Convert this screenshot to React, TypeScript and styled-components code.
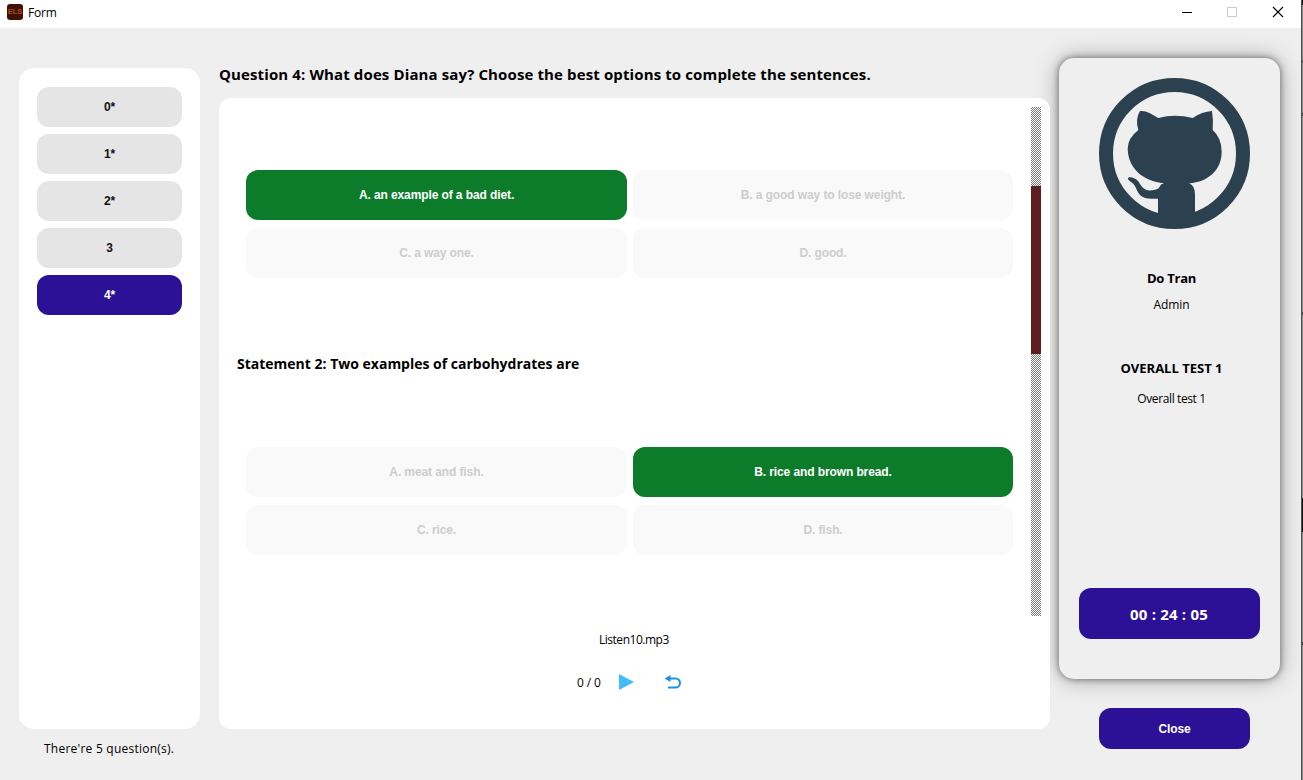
import React from "react";
import styled, { createGlobalStyle } from "styled-components";

const GlobalStyle = createGlobalStyle`
  * { box-sizing: border-box; }
  body { margin: 0; background: #efefef; font-family: "Open Sans", "Noto Sans", sans-serif; color: #000; }
  button { border: 0; padding: 0; margin: 0; }
`;

const Desktop = styled.div`
  width: 1303px;
  height: 780px;
  overflow: hidden;
  padding-right: 1px;
  background: linear-gradient(#111 0 5px, #8c8c8c 5px 60px, #555 60px 63px, #8c8c8c 63px 113px, #444 113px 116px, #8c8c8c 116px 312px, #555 312px 315px, #8c8c8c 315px 498px, #111 498px 532px, #8c8c8c 532px 642px, #444 642px 645px, #8c8c8c 645px);
`;

const Window = styled.div`
  height: 780px;
  overflow: hidden;
  background: #efefef;
  border-right: 1px solid #4f4f4f;
  display: flex;
  flex-direction: column;
`;

const TitleBar = styled.header`
  flex: none;
  position: relative;
  z-index: 1;
  height: 28px;
  background: #fff;
  display: flex;
  align-items: flex-start;
  padding: 4px 17px 0 7px;
`;

const AppIcon = styled.span`
  width: 16px;
  height: 16px;
  border-radius: 3px;
  background: #421003;
  color: #a85008;
  font: bold 7.5px/16px "Liberation Sans", sans-serif;
  text-align: center;
`;

const WindowControls = styled.div`
  margin-left: auto;
  padding-top: 2px;
  display: flex;
  gap: 34px;
`;

const Label = styled.div<{ $size?: number; $bold?: boolean; $spacing?: number }>`
  font-size: ${(p) => p.$size ?? 12}px;
  line-height: 20px;
  height: 20px;
  font-weight: ${(p) => (p.$bold ? 700 : 400)};
  letter-spacing: ${(p) => p.$spacing ?? 0}px;
  white-space: nowrap;
`;

const WindowTitle = styled(Label)`
  margin: -1px 0 0 5px;
`;

const Body = styled.main`
  flex: 1;
  display: grid;
  grid-template-columns: 191px 831px 221px;
  column-gap: 9px;
  padding-left: 19px;
`;

const Sidebar = styled.aside`
  padding: 40px 10px 0 0;
`;

const QuestionList = styled.nav`
  height: 661px;
  background: #fff;
  border-radius: 15px;
  padding: 19px 18px;
  display: flex;
  flex-direction: column;
  gap: 7px;
`;

const Button = styled.button<{ $active?: boolean; $height?: number }>`
  height: ${(p) => p.$height ?? 40}px;
  border-radius: 12px;
  background: ${(p) => (p.$active ? "#2c1096" : "#e5e5e5")};
  color: ${(p) => (p.$active ? "#fff" : "#111")};
  font: bold 12px "Liberation Sans", sans-serif;
  letter-spacing: -0.15px;
`;

const Summary = styled(Label)`
  margin: 10px 0 0 25px;
`;

const Content = styled.section`
  padding-top: 36px;
  position: relative;
  z-index: 1;
`;

const Panel = styled.div`
  margin-top: 14px;
  height: 631px;
  background: #fff;
  border-radius: 12px;
  padding: 9px 9px 0 18px;
`;

const ScrollArea = styled.div`
  height: 509px;
  display: flex;
`;

const Statements = styled.div`
  flex: 1;
  padding-top: 63px;
`;

const Options = styled.div`
  display: grid;
  grid-template-columns: 381px 380px;
  gap: 8px 6px;
  padding-left: 9px;
`;

const Option = styled.div<{ $chosen?: boolean }>`
  height: 50px;
  border-radius: 12px;
  background: ${(p) => (p.$chosen ? "#0c7c2b" : "#f9f9f9")};
  color: ${(p) => (p.$chosen ? "#fff" : "#cdcdcd")};
  font: bold 12px/50px "Liberation Sans", sans-serif;
  letter-spacing: -0.1px;
  text-align: center;
`;

const Statement = styled(Label)`
  margin: 76px 0 73px;
`;

const ScrollTrack = styled.div`
  width: 10px;
  padding-top: 79px;
  background: repeating-conic-gradient(#777 0 25%, #fff 0 50%) 0 0 / 2px 2px;
`;

const ScrollThumb = styled.div`
  height: 168px;
  background: #5e1f20;
`;

const Player = styled.footer`
  display: flex;
  flex-direction: column;
`;

const TrackName = styled(Label)`
  margin: 14px 0 0 362px;
`;

const Controls = styled.div`
  display: flex;
  align-items: flex-start;
  margin: 23px 0 0 340px;
`;

const PlayIcon = styled.svg`
  margin-left: 17px;
`;

const UndoIcon = styled.svg`
  margin-left: 28px;
`;

const Account = styled.aside`
  padding-top: 30px;
  display: flex;
  flex-direction: column;
`;

const Card = styled.div`
  height: 621px;
  border-radius: 15px;
  background: #efefef;
  box-shadow: 0 0 7px rgba(0, 0, 0, 0.5), 0 0 24px rgba(0, 0, 0, 0.3);
  padding: 20px 20px 0;
  display: flex;
  flex-direction: column;
`;

const Avatar = styled.svg`
  margin-left: 20px;
  flex: none;
`;

const CardText = styled(Label)<{ $top: number }>`
  margin-top: ${(p) => p.$top}px;
  text-align: center;
  padding-left: 4px;
`;

const Timer = styled.div`
  margin-top: 179px;
  height: 51px;
  border-radius: 12px;
  background: #2c1096;
  color: #fff;
  font-size: 15px;
  font-weight: 700;
  line-height: 53px;
  letter-spacing: 0.2px;
  padding-right: 1px;
  text-align: center;
`;

const CloseButton = styled(Button)`
  margin: 29px 30px 0 40px;
`;

const questions = ["0*", "1*", "2*", "3", "4*"];

const first = ["A. an example of a bad diet.", "B. a good way to lose weight.", "C. a way one.", "D. good."];
const second = ["A. meat and fish.", "B. rice and brown bread.", "C. rice.", "D. fish."];

function OptionGroup({ items, chosen }: { items: string[]; chosen: number }) {
  return (
    <Options>
      {items.map((text, i) => (
        <Option key={text} $chosen={i === chosen}>{text}</Option>
      ))}
    </Options>
  );
}

export default function App() {
  return (
    <Desktop>
      <GlobalStyle />
      <Window>
        <TitleBar>
          <AppIcon>ELS</AppIcon>
          <WindowTitle $spacing={-0.2}>Form</WindowTitle>
          <WindowControls>
            <svg width="12" height="12"><path d="M2 6.5h10" stroke="#000" /></svg>
            <svg width="12" height="12"><path d="M1.500 1.500h9v9h-9z" fill="none" stroke="#ccc" /></svg>
            <svg width="12" height="12"><path d="M1 1l10 10M11 1L1 11" stroke="#000" strokeWidth="1.100" /></svg>
          </WindowControls>
        </TitleBar>
        <Body>
          <Sidebar>
            <QuestionList>
              {questions.map((q, i) => (
                <Button key={q} $active={i === 4}>{q}</Button>
              ))}
            </QuestionList>
            <Summary $spacing={0.24}>There're 5 question(s).</Summary>
          </Sidebar>
          <Content>
            <Label $size={15} $bold $spacing={0.12}>Question 4: What does Diana say? Choose the best options to complete the sentences.</Label>
            <Panel>
              <ScrollArea>
                <Statements>
                  <OptionGroup items={first} chosen={0} />
                  <Statement $size={14} $bold>Statement 2: Two examples of carbohydrates are</Statement>
                  <OptionGroup items={second} chosen={1} />
                </Statements>
                <ScrollTrack><ScrollThumb /></ScrollTrack>
              </ScrollArea>
              <Player>
                <TrackName $spacing={-0.48}>Listen10.mp3</TrackName>
                <Controls>
                  <Label $spacing={-0.15}>0 / 0</Label>
                  <PlayIcon width="17" height="18" viewBox="0 0 17 18"><path d="M1 1l15 8-15 8z" fill="#42bdfb" /></PlayIcon>
                  <UndoIcon width="20" height="18" viewBox="0 0 20 18">
                    <path d="M5 5.500h7.500a4.500 4.500 0 0 1 0 9H5" fill="none" stroke="#1b95e0" strokeWidth="2" />
                    <path d="M1.500 5.500L7.500 2v7z" fill="#1b95e0" />
                  </UndoIcon>
                </Controls>
              </Player>
            </Panel>
          </Content>
          <Account>
            <Card>
              <Avatar width="151" height="151" viewBox="0 0 151 151">
                <circle cx="75.500" cy="75.500" r="68.500" fill="none" stroke="#2c414f" strokeWidth="14" />
                <path fill="#2c414f" d="M41 33Q46 32.500 51 35.300L59.300 40Q76 35.500 93.700 40Q103 33.500 113 33Q114.500 42 113.700 52Q122.700 60 122.700 73.700C122.700 92 109 104 90.300 105.300Q96 108 96 116V141H59V120.700H52.700C42 120.500 40 117 36.500 109C34 103.500 29 103.500 29 100.500C29 98.500 35 98.500 39 103C42 107 44 112.500 51 112.500Q60 111.500 60.300 109.300Q61.500 106 65 105.300C44 103.500 28.700 90 28.700 70.300Q29 60 39.300 52Q36 41 41 33Z" />
              </Avatar>
              <CardText $top={39} $size={13} $bold $spacing={-0.25}>Do Tran</CardText>
              <CardText $top={7} $spacing={-0.1}>Admin</CardText>
              <CardText $top={43} $size={13} $bold>OVERALL TEST 1</CardText>
              <CardText $top={11} $spacing={-0.38}>Overall test 1</CardText>
              <Timer>00 : 24 : 05</Timer>
            </Card>
            <CloseButton $active $height={41}>Close</CloseButton>
          </Account>
        </Body>
      </Window>
    </Desktop>
  );
}
